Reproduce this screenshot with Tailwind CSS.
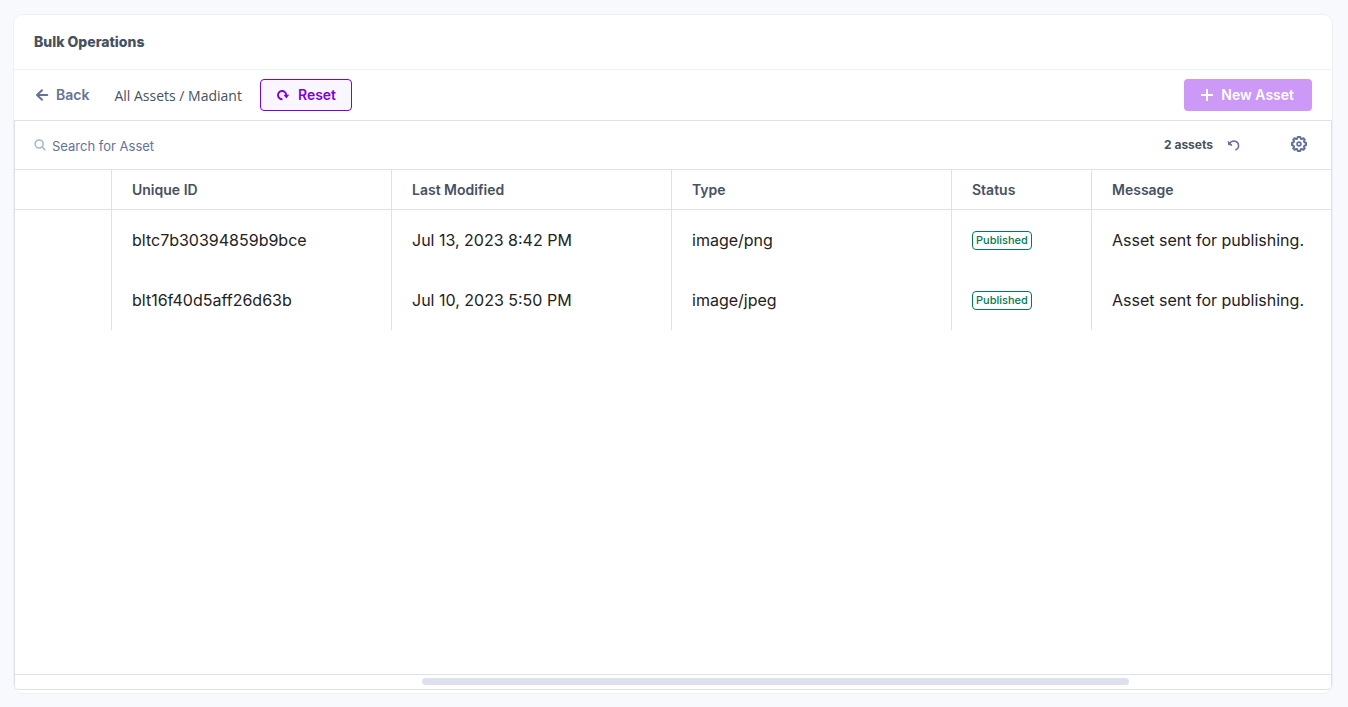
<!DOCTYPE html>
<html lang="en">
<head>
<meta charset="utf-8">
<meta name="viewport" content="width=device-width, initial-scale=1">
<title>Bulk Operations</title>
<script src="https://cdn.jsdelivr.net/npm/@tailwindcss/browser@4"></script>
</head>
<body class="flex min-h-screen flex-col bg-[#f7f9fd] pt-3.5 pr-[15px] pb-[13px] pl-[13px] font-['Inter',sans-serif] text-[#475161]">
<main class="flex grow flex-col overflow-hidden rounded-[10px] border border-[#edf1f7] bg-white">
  <header class="flex h-[55px] items-center border-b border-[#edf1f7] px-5">
    <h1 class="text-sm font-extrabold">Bulk Operations</h1>
  </header>

  <div class="flex h-[50px] items-center px-5">
    <button type="button" class="flex items-center gap-1.5 text-sm font-semibold text-[#647299]">
      <svg class="size-4" viewBox="0 0 16 16" fill="none" stroke="currentColor" stroke-width="2" stroke-linecap="round" stroke-linejoin="round" aria-hidden="true"><path d="M13.3 8H3M8 3.2 3 8l5 4.8"/></svg>
      Back
    </button>
    <span class="ml-[25px] pt-0.5 font-['Open_Sans',sans-serif] text-sm">All Assets / Madiant</span>
    <button type="button" class="ml-[18px] flex h-8 items-center gap-2 rounded border border-[#7c00e0] bg-[#f9f6ff] px-[15px] text-sm font-semibold text-[#7c00e0]">
      <svg class="size-3.5" viewBox="0 0 14 14" fill="none" aria-hidden="true"><path d="M6.500 11.200A4.100 4.100 0 1 1 10.200 7" stroke="currentColor" stroke-width="1.900"/><path d="M7.600 6.800h5.600L10.400 10.400z" fill="currentColor"/></svg>
      Reset
    </button>
    <button type="button" disabled class="ml-auto flex h-8 items-center gap-1.5 rounded bg-[#cc99f7] pr-[18px] pl-[15px] text-sm font-semibold text-white">
      <svg class="size-4" viewBox="0 0 16 16" fill="none" stroke="currentColor" stroke-width="2" aria-hidden="true"><path d="M8 2v12M2 8h12"/></svg>
      New Asset
    </button>
  </div>

  <section class="mb-[3px] flex grow flex-col rounded-b-sm border border-[#dde0ed]">
    <div class="flex h-12 items-center pr-6 pl-[19px]">
      <label for="asset-search" class="text-[#a9b6cb]">
        <svg class="size-3" viewBox="0 0 12 12" fill="none" stroke="currentColor" stroke-width="1.6" stroke-linecap="round" role="img" aria-label="Search for Asset"><circle cx="5.2" cy="5" r="4"/><path d="m8.2 8 2.6 2.6"/></svg>
      </label>
      <input id="asset-search" type="text" placeholder="Search for Asset" class="ml-1.5 h-8 min-w-0 grow pt-0.5 text-[13px] outline-none placeholder:text-[#647299]">
      <span class="text-xs font-bold">2 assets</span>
      <button type="button" aria-label="Refresh" class="ml-3.5 text-[#647299]">
        <svg class="size-3.5" viewBox="0 0 14 14" fill="none" stroke="currentColor" stroke-width="1.5" stroke-linecap="round" stroke-linejoin="round" aria-hidden="true"><path d="M1.8 6.2C3.2 4 5.8 2.4 8.4 3.2c4 1.4 4.3 6.8.5 8.6"/><path d="M1.200 3.800l.5 2.900 3 .500z" fill="currentColor" stroke-width="1"/></svg>
      </button>
      <button type="button" aria-label="Table settings" class="mb-0.5 ml-[50px] text-[#647299]">
        <svg class="size-4" viewBox="0 0 16 16" fill="none" stroke="currentColor" stroke-width="2" stroke-linejoin="round" aria-hidden="true"><path d="M6.7 1h2.6l.5 1.7 1 .4 1.6-.9 1.4 1.4-.9 1.6.4 1 1.7.5v2.6l-1.700.5-.4 1 .9 1.600-1.400 1.400-1.600-.9-1 .4-.5 1.700H6.700l-.5-1.700-1-.4-1.600.9-1.400-1.400.9-1.600-.4-1L1 9.300V6.700l1.700-.5.4-1-.9-1.600 1.400-1.400 1.600.9 1-.4z"/><circle cx="8" cy="8" r="1.9" stroke-width="1.7"/></svg>
      </button>
    </div>

    <div class="grow border-y border-[#dde0ed]">
      <table class="w-full table-fixed border-separate border-spacing-0 text-left">
        <colgroup><col class="w-[97px]"><col class="w-[280px]"><col class="w-[280px]"><col class="w-[280px]"><col class="w-[140px]"><col></colgroup>
        <thead class="text-sm">
          <tr class="h-10">
            <td class="border-r border-b border-[#dde0ed]"></td>
            <th scope="col" class="border-r border-b border-[#dde0ed] px-5 font-semibold">Unique ID</th>
            <th scope="col" class="border-r border-b border-[#dde0ed] px-5 font-semibold">Last Modified</th>
            <th scope="col" class="border-r border-b border-[#dde0ed] px-5 font-semibold">Type</th>
            <th scope="col" class="border-r border-b border-[#dde0ed] px-5 font-semibold">Status</th>
            <th scope="col" class="border-b border-[#dde0ed] px-5 font-semibold">Message</th>
          </tr>
        </thead>
        <tbody class="text-base whitespace-nowrap text-[#222222]">
          <tr class="h-[60px]">
            <td class="border-r border-[#dde0ed]"></td>
            <td class="border-r border-[#dde0ed] px-5">bltc7b30394859b9bce</td>
            <td class="border-r border-[#dde0ed] px-5">Jul 13, 2023 8:42 PM</td>
            <td class="border-r border-[#dde0ed] px-5">image/png</td>
            <td class="border-r border-[#dde0ed] px-5"><span class="flex h-[19px] w-fit items-center rounded border border-[#007a52] px-[3px] text-[11px] font-medium text-[#007a52]">Published</span></td>
            <td class="pl-5">Asset sent for publishing.</td>
          </tr>
          <tr class="h-[60px]">
            <td class="border-r border-[#dde0ed]"></td>
            <td class="border-r border-[#dde0ed] px-5">blt16f40d5aff26d63b</td>
            <td class="border-r border-[#dde0ed] px-5">Jul 10, 2023 5:50 PM</td>
            <td class="border-r border-[#dde0ed] px-5">image/jpeg</td>
            <td class="border-r border-[#dde0ed] px-5"><span class="flex h-[19px] w-fit items-center rounded border border-[#007a52] px-[3px] text-[11px] font-medium text-[#007a52]">Published</span></td>
            <td class="pl-5">Asset sent for publishing.</td>
          </tr>
        </tbody>
      </table>
    </div>

    <div class="h-3.5 pt-[3px]">
      <div class="h-[7px] rounded-full bg-[#dde0ed]" style="margin-left:30.93%;width:53.72%"></div>
    </div>
  </section>
</main>
</body>
</html>
